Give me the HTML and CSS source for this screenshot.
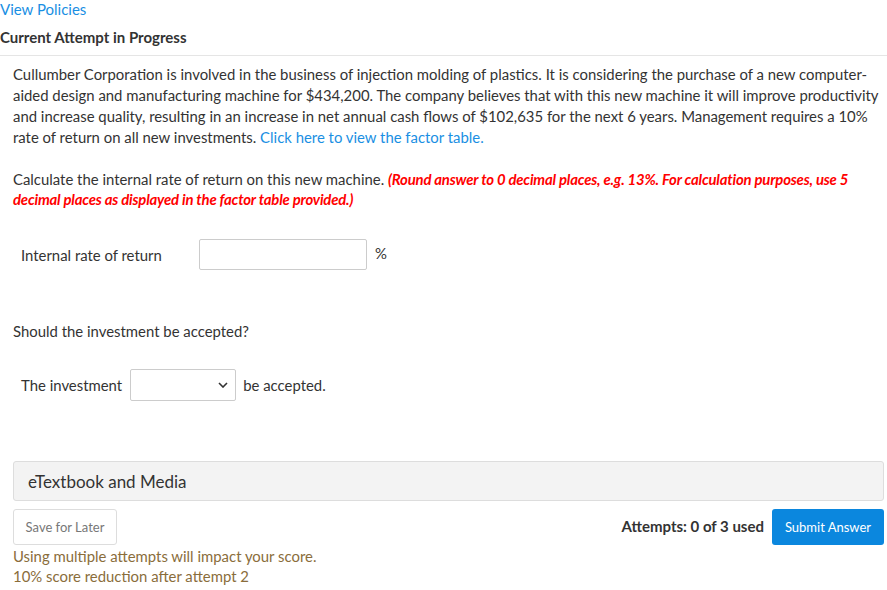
FILE: index.html
```html
<!DOCTYPE html>
<html>
<head>
<meta charset="utf-8">
<link rel="stylesheet" href="styles.css">
</head>
<body>
<div class="page">
  <a class="policies" href="#">View Policies</a>
  <div class="attempt-head">Current Attempt in Progress</div>
  <div class="question">
    <p class="stem">Cullumber Corporation is involved in the business of injection molding of plastics. It is considering the purchase of a new computer-aided design and manufacturing machine for $434,200. The company believes that with this new machine it will improve productivity and increase quality, resulting in an increase in net annual cash flows of $102,635 for the next 6 years. Management requires a 10% rate of return on all new investments. <a href="#">Click here to view the factor table.</a></p>
    <p class="stem calc">Calculate the internal rate of return on this new machine. <em class="hint">(Round answer to 0 decimal places, e.g. 13%. For calculation purposes, use 5 decimal places as displayed in the factor table provided.)</em></p>
    <div class="field-row irr">
      <span class="label">Internal rate of return</span>
      <span class="textbox"></span>
      <span class="unit">%</span>
    </div>
    <p class="stem should">Should the investment be accepted?</p>
    <div class="field-row inv">
      <span class="label">The investment</span>
      <span class="select"><svg width="10" height="6" viewBox="0 0 10 6"><path d="M1 1 L5 5 L9 1" fill="none" stroke="#333" stroke-width="1.6"/></svg></span>
      <span class="after">be accepted.</span>
    </div>
    <div class="media">eTextbook and Media</div>
    <div class="actions">
      <div class="left">
        <button class="save">Save for Later</button>
        <div class="warn">Using multiple attempts will impact your score.<br>10% score reduction after attempt 2</div>
      </div>
      <div class="right">
        <span class="attempts">Attempts: 0 of 3 used</span>
        <button class="submit">Submit Answer</button>
      </div>
    </div>
  </div>
</div>
</body>
</html>
```
FILE: styles.css
```css
html, body {
  margin: 0;
  padding: 0;
  background: #fff;
}
body {
  font-family: Lato, "Open Sans", sans-serif;
  color: #333;
  font-size: 14.9px;
}
.page {
  width: 887px;
}
.policies {
  display: block;
  color: #1a8fe3;
  text-decoration: none;
  font-size: 15px;
  line-height: 18px;
}
.attempt-head {
  font-weight: bold;
  font-size: 15px;
  color: #333;
  line-height: 20px;
  padding-top: 9px;
  padding-bottom: 8px;
  border-bottom: 1px solid #e5e5e5;
}
.question {
  padding: 8px 3px 0 13px;
}
.stem {
  margin: 0 -3px 0 0;
  line-height: 21px;
}
.stem a {
  color: #1a8fe3;
  text-decoration: none;
}
.calc {
  margin-top: 21px;
  line-height: 20px;
}
.hint {
  color: #f00;
  font-weight: bold;
  font-style: italic;
  letter-spacing: -0.19px;
}
.field-row {
  display: flex;
  align-items: center;
  padding-left: 8px;
}
.irr {
  margin-top: 30px;
  height: 31px;
}
.irr .label {
  width: 178px;
}
.textbox {
  width: 168px;
  height: 31px;
  border: 1px solid #ccc;
  border-radius: 2px;
  box-sizing: border-box;
}
.unit {
  margin-left: 8px;
  margin-top: -3px;
}
.should {
  margin-top: 51px;
}
.inv {
  margin-top: 27px;
  height: 32px;
}
.inv .label {
  margin-right: 8px;
}
.select {
  width: 106px;
  height: 32px;
  box-sizing: border-box;
  border: 1px solid #ccc;
  border-radius: 2px;
  display: flex;
  align-items: center;
  justify-content: flex-end;
  padding-right: 7px;
}
.after {
  margin-left: 7px;
}
.media {
  margin-top: 60px;
  height: 40px;
  box-sizing: border-box;
  background: #f3f3f3;
  border: 1px solid #ddd;
  border-radius: 3px;
  font-size: 17px;
  color: #333;
  display: flex;
  align-items: center;
  padding-left: 14px;
}
.actions {
  display: flex;
  justify-content: space-between;
  margin-top: 8px;
}
.save {
  font-family: Lato, sans-serif;
  font-size: 13px;
  color: #777;
  background: #fff;
  border: 1px solid #ddd;
  border-radius: 3px;
  width: 104px;
  height: 36px;
  padding: 0;
  display: block;
}
.warn {
  color: #8a6d3b;
  line-height: 20px;
  margin-top: 1px;
}
.right {
  display: flex;
  align-items: flex-start;
}
.attempts {
  font-weight: bold;
  font-size: 15px;
  margin-top: 8px;
  margin-right: 8px;
}
.submit {
  font-family: Lato, sans-serif;
  font-size: 13px;
  color: #fff;
  background: #0b87de;
  border: none;
  border-radius: 3px;
  width: 112px;
  height: 36px;
  padding: 0;
}
```
